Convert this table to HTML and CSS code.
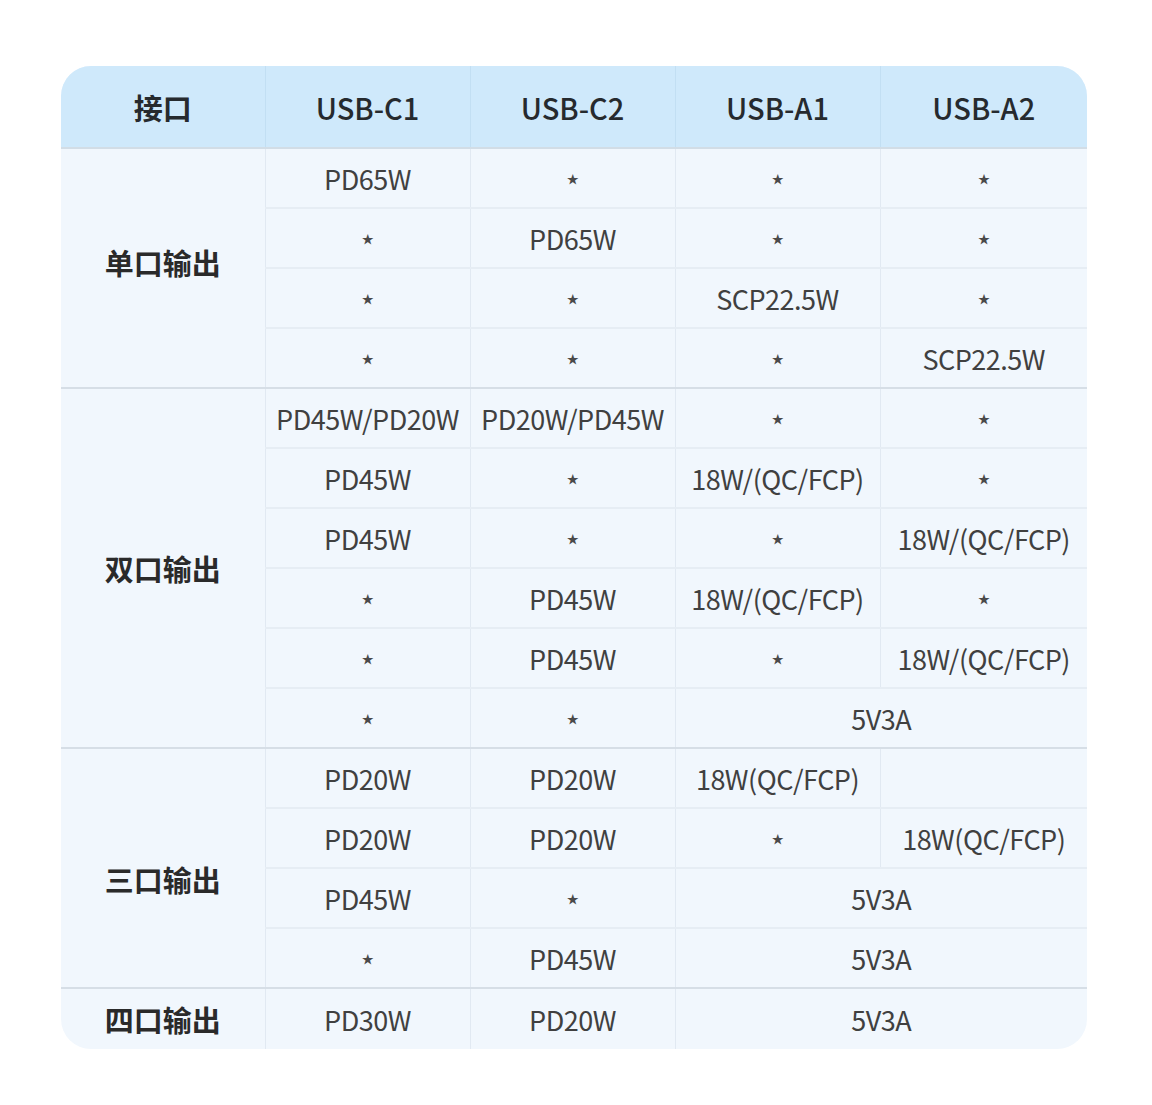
FILE: index.html
```html
<!DOCTYPE html>
<html lang="zh-CN">
<head>
<meta charset="utf-8">
<title>接口输出</title>
<link rel="stylesheet" href="styles.css">
</head>
<body>
<div class="sheet">
  <table class="spec">
    <colgroup>
      <col class="c-label"><col class="c-port"><col class="c-port"><col class="c-port"><col class="c-last">
    </colgroup>
    <thead>
      <tr><th>接口</th><th>USB-C1</th><th>USB-C2</th><th>USB-A1</th><th>USB-A2</th></tr>
    </thead>
    <tbody class="group">
      <tr><td class="label up" rowspan="4">单口输出</td><td>PD65W</td><td class="star">★</td><td class="star">★</td><td class="star">★</td></tr>
      <tr><td class="star">★</td><td>PD65W</td><td class="star">★</td><td class="star">★</td></tr>
      <tr><td class="star">★</td><td class="star">★</td><td>SCP22.5W</td><td class="star">★</td></tr>
      <tr><td class="star">★</td><td class="star">★</td><td class="star">★</td><td>SCP22.5W</td></tr>
    </tbody>
    <tbody class="group">
      <tr><td class="label" rowspan="6">双口输出</td><td>PD45W/PD20W</td><td>PD20W/PD45W</td><td class="star">★</td><td class="star">★</td></tr>
      <tr><td>PD45W</td><td class="star">★</td><td>18W/(QC/FCP)</td><td class="star">★</td></tr>
      <tr><td>PD45W</td><td class="star">★</td><td class="star">★</td><td>18W/(QC/FCP)</td></tr>
      <tr><td class="star">★</td><td>PD45W</td><td>18W/(QC/FCP)</td><td class="star">★</td></tr>
      <tr><td class="star">★</td><td>PD45W</td><td class="star">★</td><td>18W/(QC/FCP)</td></tr>
      <tr><td class="star">★</td><td class="star">★</td><td colspan="2">5V3A</td></tr>
    </tbody>
    <tbody class="group">
      <tr><td class="label down" rowspan="4">三口输出</td><td>PD20W</td><td>PD20W</td><td>18W(QC/FCP)</td><td></td></tr>
      <tr><td>PD20W</td><td>PD20W</td><td class="star">★</td><td>18W(QC/FCP)</td></tr>
      <tr><td>PD45W</td><td class="star">★</td><td colspan="2">5V3A</td></tr>
      <tr><td class="star">★</td><td>PD45W</td><td colspan="2">5V3A</td></tr>
    </tbody>
    <tbody class="group last">
      <tr><td class="label">四口输出</td><td>PD30W</td><td>PD20W</td><td colspan="2">5V3A</td></tr>
    </tbody>
  </table>
</div>
</body>
</html>
```

FILE: styles.css
```css
html, body {
  margin: 0;
  padding: 0;
  background: #ffffff;
}

body {
  font-family: "Noto Sans CJK SC", "Noto Sans", sans-serif;
  color: #3c3c3c;
}

.sheet {
  margin: 66px 0 0 61px;
  width: 1026px;
  border-radius: 30px;
  overflow: hidden;
  background: #f1f7fd;
}

.spec {
  width: 1026px;
  border-collapse: collapse;
  table-layout: fixed;
}

.c-label { width: 204px; }
.c-port { width: 205px; }
.c-last { width: 207px; }

.spec th {
  height: 81px;
  padding: 0;
  background: #cfe9fb;
  color: #262a2e;
  font-size: 29px;
  font-weight: 500;
  text-align: center;
  vertical-align: middle;
  border-left: 1px solid #c2dff3;
  border-bottom: 2px solid #d2dde6;
}

.spec th:first-child {
  border-left: none;
  font-weight: 700;
}

.spec td {
  height: 58px;
  padding: 0;
  text-align: center;
  vertical-align: middle;
  font-size: 27px;
  color: #404040;
  border-left: 1px solid #e1e9f2;
  border-top: 2px solid #e6edf4;
  white-space: nowrap;
  letter-spacing: -0.5px;
}

.spec td.label {
  border-left: none;
  font-size: 29px;
  font-weight: 700;
  color: #2a2a2a;
  letter-spacing: 0;
}

.spec td.label.up {
  padding-bottom: 12px;
}

.spec td.label.down {
  padding-top: 22px;
}

.spec td.star {
  font-size: 12px;
  color: #4a4a4a;
}

.spec tbody.group tr:first-child td {
  border-top: 2px solid #d6dee6;
}

.spec thead + tbody.group tr:first-child td {
  border-top: none;
}

.spec tbody.last td {
  height: 60px;
}
```
